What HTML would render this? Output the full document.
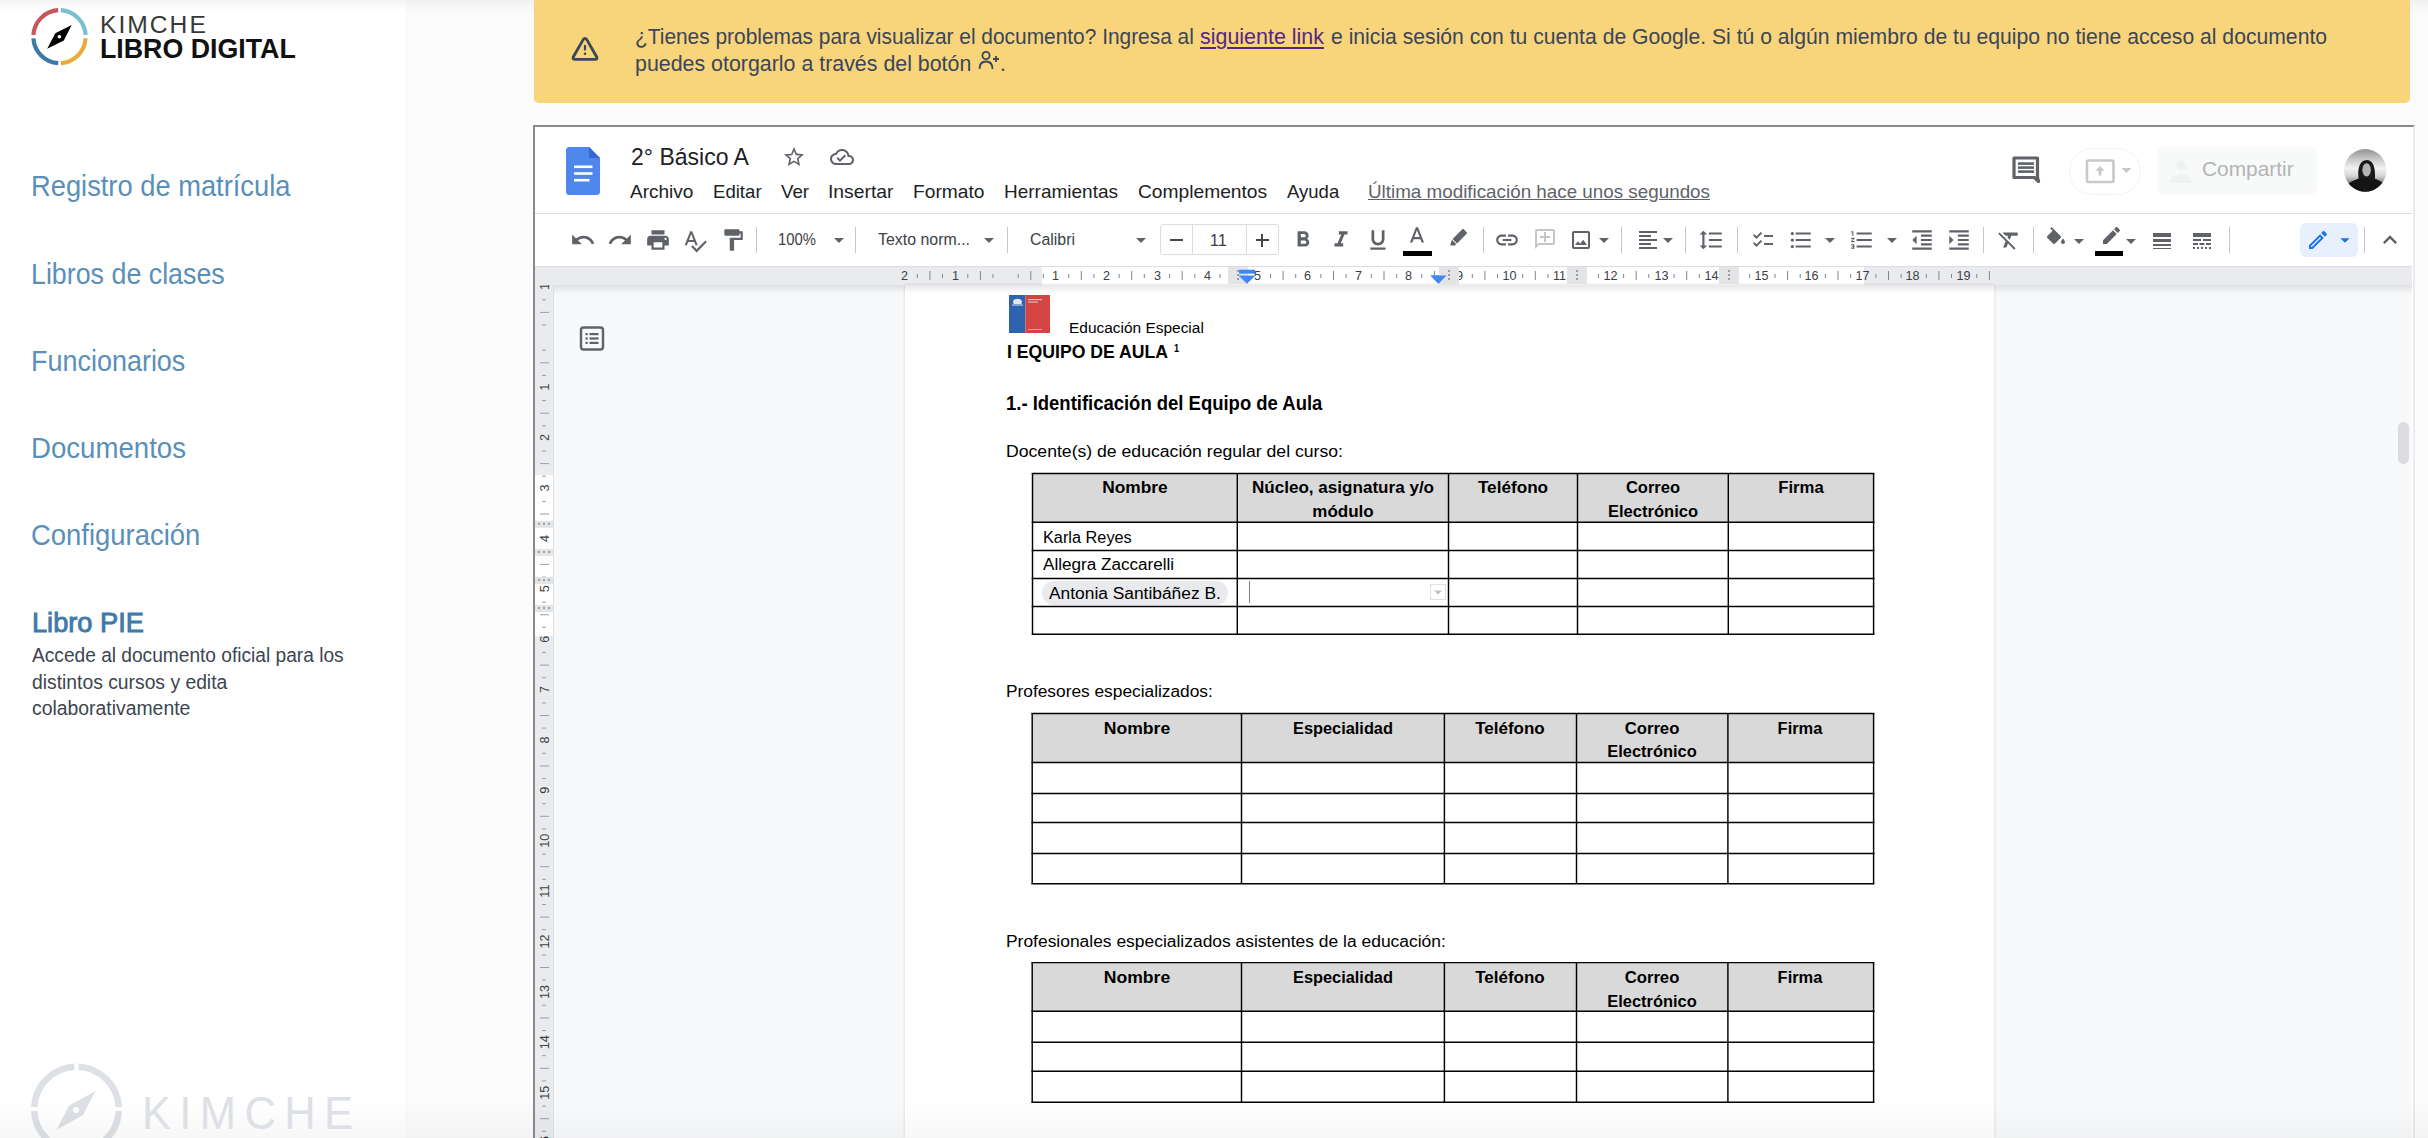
<!DOCTYPE html>
<html><head><meta charset="utf-8"><style>
html,body{margin:0;padding:0;}
body{width:2428px;height:1138px;overflow:hidden;position:relative;background:#fff;font-family:"Liberation Sans", sans-serif;}
.t{position:absolute;white-space:nowrap;line-height:1;}
</style></head><body>
<div style="position:absolute;left:405px;top:0;width:2023px;height:1138px;background:#fbfbfc"></div>
<div style="position:absolute;left:0;top:0;width:2428px;height:12px;background:linear-gradient(rgba(0,0,0,0.045),rgba(0,0,0,0))"></div>
<svg style="position:absolute;left:0;top:0" width="405" height="80">
<g fill="none" stroke-width="4.2">
<path d="M 33.4 34.9 A 26.5 26.5 0 0 1 58.2 10.2" stroke="#c9545a"/>
<path d="M 60.8 10.2 A 26.5 26.5 0 0 1 85.6 34.9" stroke="#78bfd0"/>
<path d="M 85.6 38.4 A 26.5 26.5 0 0 1 60.8 63.2" stroke="#e8ab3c"/>
<path d="M 58.2 63.2 A 26.5 26.5 0 0 1 33.4 38.4" stroke="#3d78a8"/>
</g>
<path d="M 71.7 25 L 63.8 40.5 L 47.2 48.8 L 55.3 33.2 Z" fill="#000"/>
<circle cx="59.4" cy="36.7" r="1.8" fill="#fff"/>
</svg>
<svg style="position:absolute;left:0;top:1040" width="405" height="98">
<g fill="none" stroke="#dde0e5" stroke-width="6.5">
<path d="M 34.2 67 A 42.5 42.5 0 0 1 74.5 26.7"/>
<path d="M 78.5 26.7 A 42.5 42.5 0 0 1 118.8 67"/>
<path d="M 118.8 71 A 42.5 42.5 0 0 1 78.5 111.3"/>
<path d="M 74.5 111.3 A 42.5 42.5 0 0 1 34.2 71"/>
</g>
<path d="M 95.5 51 L 83 75 L 56.5 90 L 69 65.5 Z" fill="#dde0e5"/>
<circle cx="76" cy="70" r="3" fill="#fff"/>
</svg>
<div style="position:absolute;left:534px;top:0;width:1876px;height:103px;background:#f8d47b;border-radius:0 0 5px 5px;"></div>
<svg style="position:absolute;left:570px;top:34px" width="30" height="30" viewBox="0 0 30 30">
<path d="M13.2 5.6 Q15 3 16.8 5.6 L26.6 22.8 Q27.8 25.4 25 25.4 H5 Q2.2 25.4 3.4 22.8 Z" fill="none" stroke="#3b4658" stroke-width="2.8" stroke-linejoin="round"/>
<line x1="15" y1="11.8" x2="15" y2="15.6" stroke="#3b4658" stroke-width="2.2" stroke-linecap="round"/>
<circle cx="15" cy="19.8" r="1.3" fill="#3b4658"/>
</svg>
<svg style="position:absolute;left:978px;top:50px" width="24" height="22" viewBox="0 0 24 22">
<circle cx="8" cy="5.5" r="3.6" fill="none" stroke="#3b4658" stroke-width="1.8"/>
<path d="M1.5 19 C1.5 13 4.5 11.5 8 11.5 C11.5 11.5 14.5 13 14.5 19" fill="none" stroke="#3b4658" stroke-width="1.8"/>
<path d="M18 6 V12 M15 9 H21" stroke="#3b4658" stroke-width="1.8"/>
</svg>
<div style="position:absolute;left:533px;top:125px;width:1882px;height:1013px;background:#fff;border-top:2px solid #8a8a8a;border-left:2px solid #8a8a8a;border-right:2px solid #ebebeb;box-sizing:border-box;"></div>
<div style="position:absolute;left:535px;top:213px;width:1877px;height:1px;background:#dadce0"></div>
<div style="position:absolute;left:535px;top:266px;width:1877px;height:1px;background:#dadce0"></div>
<div style="position:absolute;left:535px;top:267px;width:1877px;height:871px;background:#f8f9fa"></div>
<div style="position:absolute;left:535px;top:267px;width:1877px;height:18px;background:#e9ebee"></div>
<div style="position:absolute;left:1042px;top:267px;width:822px;height:18px;background:#fff"></div>
<div style="position:absolute;left:553px;top:285px;width:1859px;height:9px;background:linear-gradient(#dedfe1,rgba(248,249,250,0))"></div>
<div style="position:absolute;left:905px;top:285px;width:1089px;height:853px;background:#fff;box-shadow:0 0 3px rgba(0,0,0,0.16)"></div>
<div style="position:absolute;left:905px;top:285px;width:1089px;height:9px;background:linear-gradient(rgba(0,0,0,0.09),rgba(0,0,0,0))"></div>
<div style="position:absolute;left:535px;top:285px;width:19px;height:853px;background:#fff;border-right:1px solid #dfe0e2;box-sizing:border-box"></div>
<div style="position:absolute;left:535px;top:285px;width:18px;height:190px;background:#e9ebee"></div>
<div style="position:absolute;left:535px;top:636px;width:18px;height:502px;background:#e9ebee"></div>
<svg style="position:absolute;left:565px;top:146px" width="36" height="50" viewBox="0 0 36 50">
<path d="M3.5 1 H24 L35 12 V45.5 A3.5 3.5 0 0 1 31.5 49 H4.5 A3.5 3.5 0 0 1 1 45.5 V4.5 A3.5 3.5 0 0 1 4.5 1 Z" fill="#4f86ec"/>
<path d="M24 1 L35 12 H24 Z" fill="#3367d6"/>
<rect x="9" y="19.5" width="18.5" height="2.6" fill="#fff"/>
<rect x="9" y="26.2" width="18.5" height="2.6" fill="#fff"/>
<rect x="9" y="32.9" width="15.5" height="2.6" fill="#fff"/>
</svg>
<svg style="position:absolute;left:782.0px;top:144.5px" width="24" height="24" viewBox="0 0 24 24"><path d="M22 9.24l-7.19-.62L12 2 9.19 8.63 2 9.24l5.46 4.73L5.82 21 12 17.27 18.18 21l-1.63-7.03L22 9.24zM12 15.4l-3.76 2.27 1-4.28-3.32-2.88 4.38-.38L12 6.1l1.71 4.04 4.38.38-3.32 2.88 1 4.28L12 15.4z" fill="#5f6368" /></svg>
<svg style="position:absolute;left:829.5px;top:144.5px" width="24" height="24" viewBox="0 0 24 24"><path d="M19.35 10.04C18.67 6.59 15.64 4 12 4 9.11 4 6.6 5.64 5.35 8.04 2.34 8.36 0 10.91 0 14c0 3.31 2.69 6 6 6h13c2.76 0 5-2.24 5-5 0-2.64-2.05-4.78-4.65-4.96zM19 18H6c-2.21 0-4-1.79-4-4 0-2.05 1.53-3.76 3.56-3.97l1.07-.11.5-.95C8.08 7.14 9.94 6 12 6c2.62 0 4.88 1.86 5.39 4.43l.3 1.5 1.53.11c1.56.1 2.78 1.41 2.78 2.96 0 1.65-1.35 3-3 3zm-9-3.82l-2.09-2.09L6.5 13.5 10 17l6.01-6.01-1.41-1.41z" fill="#5f6368" /></svg>
<svg style="position:absolute;left:2010px;top:154px" width="32" height="30" viewBox="0 0 32 30">
<path d="M4 4 H27.5 V23.5 L28.5 27.5 L24.5 23.5 H4 Z" fill="none" stroke="#5f6368" stroke-width="3.2" stroke-linejoin="round"/>
<rect x="8" y="8.3" width="16" height="2.6" fill="#5f6368"/><rect x="8" y="12.3" width="16" height="2.6" fill="#5f6368"/><rect x="8" y="16.3" width="16" height="2.6" fill="#5f6368"/>
</svg>
<div style="position:absolute;left:2069px;top:147.5px;width:71.5px;height:47px;border-radius:23.5px;border:1px solid #f3f3f3;box-sizing:border-box"></div>
<svg style="position:absolute;left:2084px;top:157px" width="50" height="28" viewBox="0 0 50 28">
<rect x="3" y="3.5" width="26.5" height="21.5" fill="none" stroke="#c8c8c8" stroke-width="2.6" rx="1.5"/>
<path d="M16 9 L11.5 13.8 H14.6 V18.5 H17.4 V13.8 H20.5 Z" fill="#c8c8c8"/>
<path d="M37.5 11 L47.5 11 L42.5 16 Z" fill="#c8c8c8"/>
</svg>
<div style="position:absolute;left:2157px;top:147px;width:160px;height:48px;border-radius:6px;background:#f8f9f9"></div>
<svg style="position:absolute;left:2168px;top:157px" width="26" height="28" viewBox="0 0 26 28"><circle cx="13" cy="8.5" r="5" fill="#f0f1f1"/><path d="M2 26 C2 19 7 17.5 13 17.5 C19 17.5 24 19 24 26 Z" fill="#f0f1f1"/></svg>
<svg style="position:absolute;left:2343px;top:148px" width="44" height="45" viewBox="0 0 44 45">
<defs><clipPath id="av"><circle cx="22.2" cy="22.3" r="21.2"/></clipPath>
<linearGradient id="avg" x1="0" y1="0" x2="0" y2="1"><stop offset="0" stop-color="#8c8c8c"/><stop offset="0.25" stop-color="#c9c9c9"/><stop offset="0.45" stop-color="#f2f2f2"/><stop offset="0.62" stop-color="#d6d6d6"/><stop offset="0.8" stop-color="#7a7a7a"/><stop offset="1" stop-color="#444"/></linearGradient></defs>
<g clip-path="url(#av)">
<rect width="44" height="45" fill="url(#avg)"/>
<path d="M16.5 45 L15.5 30 C14.5 22 16 12.5 23.5 12 C30.5 12 32.5 20 32 30 L33 45 Z" fill="#1a1a1a"/>
<path d="M0 45 L0 40 C5 35 10 32.5 16 30.5 L31 30.5 C36 32 40 34.5 44 38 L44 45 Z" fill="#141414"/>
<ellipse cx="23.6" cy="21.8" rx="4.3" ry="6.6" fill="#b4b4b4"/>
</g></svg>
<svg style="position:absolute;left:569.6px;top:226.5px" width="26" height="26" viewBox="0 0 24 24"><path d="M12.5 8c-2.65 0-5.05.99-6.9 2.6L2 7v9h9l-3.62-3.62c1.39-1.16 3.16-1.88 5.12-1.88 3.54 0 6.55 2.31 7.6 5.5l2.37-.78C21.08 11.03 17.15 8 12.5 8z" fill="#5f6368" /></svg>
<svg style="position:absolute;left:607.4px;top:226.5px" width="26" height="26" viewBox="0 0 24 24"><path d="M18.4 10.6C16.55 8.99 14.15 8 11.5 8c-4.65 0-8.58 3.03-9.96 7.22L3.9 16c1.05-3.19 4.05-5.5 7.6-5.5 1.95 0 3.73.72 5.12 1.88L13 16h9V7l-3.6 3.6z" fill="#5f6368" /></svg>
<svg style="position:absolute;left:645.0px;top:226.5px" width="26" height="26" viewBox="0 0 24 24"><path d="M19 8H5c-1.66 0-3 1.34-3 3v6h4v4h12v-4h4v-6c0-1.66-1.34-3-3-3zm-3 11H8v-5h8v5zm3-7c-.55 0-1-.45-1-1s.45-1 1-1 1 .45 1 1-.45 1-1 1zm-1-9H6v4h12V3z" fill="#5f6368" /></svg>
<svg style="position:absolute;left:682.0px;top:227.5px" width="26" height="26" viewBox="0 0 24 24"><path d="M12.45 16h2.09L9.43 3H7.57L2.46 16h2.09l1.12-3h5.64l1.14 3zm-6.02-5L8.5 5.48 10.57 11H6.43zm15.16.59l-8.09 8.09L9.83 16l-1.41 1.41 5.09 5.09L23 13l-1.41-1.41z" fill="#5f6368" /></svg>
<svg style="position:absolute;left:719.5px;top:226.5px" width="26" height="26" viewBox="0 0 24 24"><path d="M18 4V3c0-.55-.45-1-1-1H5c-.55 0-1 .45-1 1v4c0 .55.45 1 1 1h12c.55 0 1-.45 1-1V6h1v4H9v11c0 .55.45 1 1 1h2c.55 0 1-.45 1-1v-9h8V4h-3z" fill="#5f6368" /></svg>
<div style="position:absolute;left:756.1px;top:227px;width:1px;height:26px;background:#c7c7c7"></div>
<svg style="position:absolute;left:827.0px;top:228.0px" width="24" height="24" viewBox="0 0 24 24"><path d="M7 10l5 5 5-5z" fill="#5f6368" /></svg>
<div style="position:absolute;left:854.5px;top:227px;width:1px;height:26px;background:#c7c7c7"></div>
<svg style="position:absolute;left:977.0px;top:228.0px" width="24" height="24" viewBox="0 0 24 24"><path d="M7 10l5 5 5-5z" fill="#5f6368" /></svg>
<div style="position:absolute;left:1007.1px;top:227px;width:1px;height:26px;background:#c7c7c7"></div>
<svg style="position:absolute;left:1129.0px;top:228.0px" width="24" height="24" viewBox="0 0 24 24"><path d="M7 10l5 5 5-5z" fill="#5f6368" /></svg>
<div style="position:absolute;left:1160px;top:224px;width:119px;height:31px;border:1px solid #dadce0;border-radius:3px;box-sizing:border-box"></div>
<div style="position:absolute;left:1192px;top:224px;width:1px;height:31px;background:#dadce0"></div>
<div style="position:absolute;left:1246px;top:224px;width:1px;height:31px;background:#dadce0"></div>
<div style="position:absolute;left:1170px;top:239px;width:13px;height:2.2px;background:#444746"></div>
<div style="position:absolute;left:1255.5px;top:239px;width:13px;height:2.2px;background:#444746"></div>
<div style="position:absolute;left:1261px;top:233.5px;width:2.2px;height:13px;background:#444746"></div>
<svg style="position:absolute;left:1290.0px;top:226.5px" width="26" height="26" viewBox="0 0 24 24"><path d="M15.6 10.79c.97-.67 1.65-1.77 1.65-2.79 0-2.26-1.75-4-4-4H7v14h7.04c2.09 0 3.71-1.7 3.71-3.79 0-1.52-.86-2.82-2.15-3.42zM10 6.5h3c.83 0 1.5.67 1.5 1.5s-.67 1.5-1.5 1.5h-3v-3zm3.5 9H10v-3h3.5c.83 0 1.5.67 1.5 1.5s-.67 1.5-1.5 1.5z" fill="#5f6368" /></svg>
<svg style="position:absolute;left:1327.6px;top:226.5px" width="26" height="26" viewBox="0 0 24 24"><path d="M10 4v3h2.21l-3.42 8H6v3h8v-3h-2.21l3.42-8H18V4z" fill="#5f6368" /></svg>
<svg style="position:absolute;left:1365.0px;top:226.5px" width="26" height="26" viewBox="0 0 24 24"><path d="M12 17c3.31 0 6-2.69 6-6V3h-2.5v8c0 1.93-1.57 3.5-3.5 3.5S8.5 12.93 8.5 11V3H6v8c0 3.31 2.69 6 6 6zm-7 2v2h14v-2H5z" fill="#5f6368" /></svg>
<svg style="position:absolute;left:1404.0px;top:224.0px" width="26" height="26" viewBox="0 0 24 24"><path d="M11 3L5.5 17h2.25l1.12-3h6.25l1.12 3h2.25L13 3h-2zm-1.38 9L12 5.67 14.38 12H9.62z" fill="#5f6368" /></svg>
<div style="position:absolute;left:1403px;top:251px;width:29px;height:4.5px;background:#000"></div>
<svg style="position:absolute;left:1446.0px;top:225.5px" width="24" height="24" viewBox="0 0 24 24"><path d="M17.7 3.3l3 3c.4.4.4 1 0 1.4L11 17.4 6.6 13 16.3 3.3c.4-.4 1-.4 1.4 0zM5.9 13.8l4.3 4.3-1.4 1.4H4.5v-1.4z" fill="#5f6368" /></svg>
<div style="position:absolute;left:1483.1px;top:227px;width:1px;height:26px;background:#c7c7c7"></div>
<svg style="position:absolute;left:1494.4px;top:226.5px" width="26" height="26" viewBox="0 0 24 24"><path d="M3.9 12c0-1.71 1.39-3.1 3.1-3.1h4V7H7c-2.76 0-5 2.24-5 5s2.24 5 5 5h4v-1.9H7c-1.71 0-3.1-1.39-3.1-3.1zM8 13h8v-2H8v2zm9-6h-4v1.9h4c1.71 0 3.1 1.39 3.1 3.1s-1.39 3.1-3.1 3.1h-4V17h4c2.76 0 5-2.24 5-5s-2.24-5-5-5z" fill="#5f6368" /></svg>
<svg style="position:absolute;left:1533.0px;top:226.5px" width="24" height="24" viewBox="0 0 24 24"><path d="M20 2H4c-1.1 0-1.99.9-1.99 2L2 22l4-4h14c1.1 0 2-.9 2-2V4c0-1.1-.9-2-2-2zm0 14H5.17L4 17.17V4h16v12zM11 5h2v4h4v2h-4v4h-2v-4H7V9h4z" fill="#c4c7c5" /></svg>
<svg style="position:absolute;left:1568.5px;top:227.5px" width="24" height="24" viewBox="0 0 24 24"><path d="M19 5v14H5V5h14m0-2H5c-1.1 0-2 .9-2 2v14c0 1.1.9 2 2 2h14c1.1 0 2-.9 2-2V5c0-1.1-.9-2-2-2zm-4.86 8.86l-3 3.87L9 13.14 6 17h12l-3.86-5.14z" fill="#5f6368" /></svg>
<svg style="position:absolute;left:1591.8px;top:228.0px" width="24" height="24" viewBox="0 0 24 24"><path d="M7 10l5 5 5-5z" fill="#5f6368" /></svg>
<div style="position:absolute;left:1620.5px;top:227px;width:1px;height:26px;background:#c7c7c7"></div>
<svg style="position:absolute;left:1635.5px;top:227.5px" width="24" height="24" viewBox="0 0 24 24"><path d="M15 15H3v2h12v-2zm0-8H3v2h12V7zM3 13h18v-2H3v2zm0 8h18v-2H3v2zM3 3v2h18V3H3z" fill="#5f6368" /></svg>
<svg style="position:absolute;left:1656.0px;top:228.0px" width="24" height="24" viewBox="0 0 24 24"><path d="M7 10l5 5 5-5z" fill="#5f6368" /></svg>
<div style="position:absolute;left:1685.0px;top:227px;width:1px;height:26px;background:#c7c7c7"></div>
<svg style="position:absolute;left:1698.0px;top:226.5px" width="26" height="26" viewBox="0 0 24 24"><path d="M6 7h2.5L5 3.5 1.5 7H4v10H1.5L5 20.5 8.5 17H6V7zm4-2v2h12V5H10zm0 14h12v-2H10v2zm0-6h12v-2H10v2z" fill="#5f6368" /></svg>
<div style="position:absolute;left:1737.2px;top:227px;width:1px;height:26px;background:#c7c7c7"></div>
<svg style="position:absolute;left:1751.0px;top:227.5px" width="24" height="24" viewBox="0 0 24 24"><path d="M22 7h-9v2h9V7zm0 8h-9v2h9v-2zM5.54 11L2 7.46l1.41-1.41 2.12 2.12 4.24-4.24 1.41 1.41L5.54 11zm0 8L2 15.46l1.41-1.41 2.12 2.12 4.24-4.24 1.41 1.41L5.54 19z" fill="#5f6368" /></svg>
<svg style="position:absolute;left:1788.0px;top:226.5px" width="26" height="26" viewBox="0 0 24 24"><path d="M4 10.5c-.83 0-1.5.67-1.5 1.5s.67 1.5 1.5 1.5 1.5-.67 1.5-1.5-.67-1.5-1.5-1.5zm0-6c-.83 0-1.5.67-1.5 1.5S3.17 7.5 4 7.5 5.5 6.83 5.5 6 4.83 4.5 4 4.5zm0 12c-.83 0-1.5.68-1.5 1.5s.68 1.5 1.5 1.5 1.5-.68 1.5-1.5-.67-1.5-1.5-1.5zM7 19h14v-2H7v2zm0-6h14v-2H7v2zm0-8v2h14V5H7z" fill="#5f6368" /></svg>
<svg style="position:absolute;left:1817.6px;top:228.0px" width="24" height="24" viewBox="0 0 24 24"><path d="M7 10l5 5 5-5z" fill="#5f6368" /></svg>
<svg style="position:absolute;left:1848.7px;top:226.5px" width="26" height="26" viewBox="0 0 24 24"><path d="M2 17h2v.5H3v1h1v.5H2v1h3v-4H2v1zm1-9h1V4H2v1h1v3zm-1 3h1.8L2 13.1v.9h3v-1H3.2L5 10.9V10H2v1zm5-6v2h14V5H7zm0 14h14v-2H7v2zm0-6h14v-2H7v2z" fill="#5f6368" /></svg>
<svg style="position:absolute;left:1879.6px;top:228.0px" width="24" height="24" viewBox="0 0 24 24"><path d="M7 10l5 5 5-5z" fill="#5f6368" /></svg>
<svg style="position:absolute;left:1909.3px;top:226.5px" width="26" height="26" viewBox="0 0 24 24"><path d="M11 17h10v-2H11v2zm-8-5l4 4V8l-4 4zm0 9h18v-2H3v2zM3 3v2h18V3H3zm8 6h10V7H11v2zm0 4h10v-2H11v2z" fill="#5f6368" /></svg>
<svg style="position:absolute;left:1946.4px;top:226.5px" width="26" height="26" viewBox="0 0 24 24"><path d="M3 21h18v-2H3v2zM3 8v8l4-4-4-4zm8 9h10v-2H11v2zM3 3v2h18V3H3zm8 6h10V7H11v2zm0 4h10v-2H11v2z" fill="#5f6368" /></svg>
<div style="position:absolute;left:1982.5px;top:227px;width:1px;height:26px;background:#c7c7c7"></div>
<svg style="position:absolute;left:1996.0px;top:226.5px" width="26" height="26" viewBox="0 0 24 24"><path d="M3.27 5L2 6.27l6.97 6.97L6.5 19h3l1.57-3.66L16.73 21 18 19.73 3.55 5.27 3.27 5zM6 5v.18L8.82 8h2.4l-.72 1.68 2.1 2.1L14.21 8H20V5H6z" fill="#5f6368" /></svg>
<div style="position:absolute;left:2032.9px;top:227px;width:1px;height:26px;background:#c7c7c7"></div>
<svg style="position:absolute;left:2044.0px;top:226.5px" width="24" height="24" viewBox="0 0 24 24"><path d="M16.56 8.94L7.62 0 6.21 1.41l2.38 2.38-5.15 5.15c-.59.59-.59 1.54 0 2.12l5.5 5.5c.29.29.68.44 1.06.44s.77-.15 1.06-.44l5.5-5.5c.59-.58.59-1.53 0-2.12zM19 11.5s-2 2.17-2 3.5c0 1.1.9 2 2 2s2-.9 2-2c0-1.33-2-3.5-2-3.5z" fill="#5f6368" /></svg>
<svg style="position:absolute;left:2067.0px;top:229.0px" width="24" height="24" viewBox="0 0 24 24"><path d="M7 10l5 5 5-5z" fill="#5f6368" /></svg>
<svg style="position:absolute;left:2099.0px;top:226.5px" width="24" height="24" viewBox="0 0 24 24"><path d="M17.75 7L14 3.25l-10 10V17h3.75l10-10zm2.96-2.96c.39-.39.39-1.02 0-1.41L18.37.29c-.39-.39-1.02-.39-1.41 0L15 2.25 18.75 6l1.96-1.96z" fill="#5f6368" /></svg>
<div style="position:absolute;left:2095px;top:251px;width:28px;height:5px;background:#000"></div>
<svg style="position:absolute;left:2119.0px;top:229.0px" width="24" height="24" viewBox="0 0 24 24"><path d="M7 10l5 5 5-5z" fill="#5f6368" /></svg>
<svg style="position:absolute;left:2150.4px;top:228.5px" width="24" height="24" viewBox="0 0 24 24"><path d="M3 17h18v-2H3v2zm0 3h18v-1H3v1zm0-7h18v-3H3v3zm0-9v4h18V4H3z" fill="#5f6368" /></svg>
<svg style="position:absolute;left:2190.4px;top:228.5px" width="24" height="24" viewBox="0 0 24 24"><path d="M3 16h5v-2H3v2zm6.5 0h5v-2h-5v2zm6.5 0h5v-2h-5v2zM3 20h2v-2H3v2zm4 0h2v-2H7v2zm4 0h2v-2h-2v2zm4 0h2v-2h-2v2zm4 0h2v-2h-2v2zM3 12h8v-2H3v2zm10 0h8v-2h-8v2zM3 4v4h18V4H3z" fill="#5f6368" /></svg>
<div style="position:absolute;left:2229.0px;top:227px;width:1px;height:26px;background:#c7c7c7"></div>
<div style="position:absolute;left:2300px;top:223px;width:58px;height:34px;border-radius:6px;background:#e8f0fe"></div>
<svg style="position:absolute;left:2306.0px;top:227.5px" width="24" height="24" viewBox="0 0 24 24"><path d="M14.06 9.02l.92.92L5.92 19H5v-.92l9.06-9.06M17.66 3c-.25 0-.51.1-.7.29l-1.83 1.83 3.75 3.75 1.83-1.83c.39-.39.39-1.02 0-1.41l-2.34-2.34c-.2-.2-.45-.29-.71-.29zm-3.6 3.19L3 17.25V21h3.75L17.81 9.94l-3.75-3.75z" fill="#1a73e8" /></svg>
<svg style="position:absolute;left:2334.4px;top:229.0px" width="22" height="22" viewBox="0 0 24 24"><path d="M7 10l5 5 5-5z" fill="#1a73e8" /></svg>
<div style="position:absolute;left:2363.9px;top:227px;width:1px;height:26px;background:#c7c7c7"></div>
<svg style="position:absolute;left:2375.5px;top:225.5px" width="28" height="28" viewBox="0 0 24 24"><path d="M12 8l-6 6 1.41 1.41L12 10.83l4.59 4.58L18 14z" fill="#5f6368" /></svg>
<svg style="position:absolute;left:535px;top:267px" width="1877" height="18"><rect x="381.8" y="7" width="1" height="4" fill="#80868b"/><rect x="394.4" y="4" width="1" height="9" fill="#80868b"/><rect x="407.0" y="7" width="1" height="4" fill="#80868b"/><rect x="432.3" y="7" width="1" height="4" fill="#80868b"/><rect x="444.9" y="4" width="1" height="9" fill="#80868b"/><rect x="457.5" y="7" width="1" height="4" fill="#80868b"/><rect x="482.7" y="7" width="1" height="4" fill="#80868b"/><rect x="495.3" y="4" width="1" height="9" fill="#80868b"/><rect x="507.9" y="7" width="1" height="4" fill="#80868b"/><rect x="533.2" y="7" width="1" height="4" fill="#80868b"/><rect x="545.8" y="4" width="1" height="9" fill="#80868b"/><rect x="558.4" y="7" width="1" height="4" fill="#80868b"/><rect x="583.6" y="7" width="1" height="4" fill="#80868b"/><rect x="596.2" y="4" width="1" height="9" fill="#80868b"/><rect x="608.8" y="7" width="1" height="4" fill="#80868b"/><rect x="634.1" y="7" width="1" height="4" fill="#80868b"/><rect x="646.7" y="4" width="1" height="9" fill="#80868b"/><rect x="659.3" y="7" width="1" height="4" fill="#80868b"/><rect x="684.5" y="7" width="1" height="4" fill="#80868b"/><rect x="697.1" y="4" width="1" height="9" fill="#80868b"/><rect x="709.7" y="7" width="1" height="4" fill="#80868b"/><rect x="735.0" y="7" width="1" height="4" fill="#80868b"/><rect x="747.6" y="4" width="1" height="9" fill="#80868b"/><rect x="760.2" y="7" width="1" height="4" fill="#80868b"/><rect x="785.4" y="7" width="1" height="4" fill="#80868b"/><rect x="798.0" y="4" width="1" height="9" fill="#80868b"/><rect x="810.6" y="7" width="1" height="4" fill="#80868b"/><rect x="835.9" y="7" width="1" height="4" fill="#80868b"/><rect x="848.5" y="4" width="1" height="9" fill="#80868b"/><rect x="861.1" y="7" width="1" height="4" fill="#80868b"/><rect x="886.3" y="7" width="1" height="4" fill="#80868b"/><rect x="898.9" y="4" width="1" height="9" fill="#80868b"/><rect x="911.5" y="7" width="1" height="4" fill="#80868b"/><rect x="936.8" y="7" width="1" height="4" fill="#80868b"/><rect x="949.4" y="4" width="1" height="9" fill="#80868b"/><rect x="962.0" y="7" width="1" height="4" fill="#80868b"/><rect x="987.2" y="7" width="1" height="4" fill="#80868b"/><rect x="999.8" y="4" width="1" height="9" fill="#80868b"/><rect x="1012.4" y="7" width="1" height="4" fill="#80868b"/><rect x="1037.7" y="7" width="1" height="4" fill="#80868b"/><rect x="1050.3" y="4" width="1" height="9" fill="#80868b"/><rect x="1062.9" y="7" width="1" height="4" fill="#80868b"/><rect x="1088.1" y="7" width="1" height="4" fill="#80868b"/><rect x="1100.7" y="4" width="1" height="9" fill="#80868b"/><rect x="1113.3" y="7" width="1" height="4" fill="#80868b"/><rect x="1138.6" y="7" width="1" height="4" fill="#80868b"/><rect x="1151.2" y="4" width="1" height="9" fill="#80868b"/><rect x="1163.8" y="7" width="1" height="4" fill="#80868b"/><rect x="1189.0" y="7" width="1" height="4" fill="#80868b"/><rect x="1201.6" y="4" width="1" height="9" fill="#80868b"/><rect x="1214.2" y="7" width="1" height="4" fill="#80868b"/><rect x="1239.5" y="7" width="1" height="4" fill="#80868b"/><rect x="1252.1" y="4" width="1" height="9" fill="#80868b"/><rect x="1264.7" y="7" width="1" height="4" fill="#80868b"/><rect x="1289.9" y="7" width="1" height="4" fill="#80868b"/><rect x="1302.5" y="4" width="1" height="9" fill="#80868b"/><rect x="1315.1" y="7" width="1" height="4" fill="#80868b"/><rect x="1340.4" y="7" width="1" height="4" fill="#80868b"/><rect x="1353.0" y="4" width="1" height="9" fill="#80868b"/><rect x="1365.6" y="7" width="1" height="4" fill="#80868b"/><rect x="1390.8" y="7" width="1" height="4" fill="#80868b"/><rect x="1403.4" y="4" width="1" height="9" fill="#80868b"/><rect x="1416.0" y="7" width="1" height="4" fill="#80868b"/><rect x="1441.3" y="7" width="1" height="4" fill="#80868b"/><rect x="1453.9" y="4" width="1" height="9" fill="#80868b"/><rect x="693" y="0" width="20" height="17" fill="#e3e4e6"/><rect x="702" y="3" width="2" height="2" fill="#9aa0a6"/><rect x="702" y="7" width="2" height="2" fill="#9aa0a6"/><rect x="702" y="11" width="2" height="2" fill="#9aa0a6"/><rect x="904" y="0" width="20" height="17" fill="#e3e4e6"/><rect x="913" y="3" width="2" height="2" fill="#9aa0a6"/><rect x="913" y="7" width="2" height="2" fill="#9aa0a6"/><rect x="913" y="11" width="2" height="2" fill="#9aa0a6"/><rect x="1032" y="0" width="20" height="17" fill="#e3e4e6"/><rect x="1041" y="3" width="2" height="2" fill="#9aa0a6"/><rect x="1041" y="7" width="2" height="2" fill="#9aa0a6"/><rect x="1041" y="11" width="2" height="2" fill="#9aa0a6"/><rect x="1184" y="0" width="20" height="17" fill="#e3e4e6"/><rect x="1193" y="3" width="2" height="2" fill="#9aa0a6"/><rect x="1193" y="7" width="2" height="2" fill="#9aa0a6"/><rect x="1193" y="11" width="2" height="2" fill="#9aa0a6"/></svg>
<svg style="position:absolute;left:1230px;top:266px" width="40" height="20" viewBox="0 0 40 20">
<rect x="9" y="3.7" width="16" height="4" fill="#4285f4"/><path d="M8.5 9.6 H25.5 L17 17.8 Z" fill="#4285f4"/></svg>
<svg style="position:absolute;left:1420px;top:266px" width="40" height="20" viewBox="0 0 40 20">
<path d="M10.5 9.6 H26.5 L18.5 17.8 Z" fill="#4285f4"/></svg>
<svg style="position:absolute;left:535px;top:285px" width="18" height="853"><text x="0" y="0" transform="translate(14.3 1.4) rotate(-90)" font-family="Liberation Sans" font-size="12.6" fill="#3c4043" text-anchor="middle">1</text><text x="0" y="0" transform="translate(14.3 102.2) rotate(-90)" font-family="Liberation Sans" font-size="12.6" fill="#3c4043" text-anchor="middle">1</text><text x="0" y="0" transform="translate(14.3 152.6) rotate(-90)" font-family="Liberation Sans" font-size="12.6" fill="#3c4043" text-anchor="middle">2</text><text x="0" y="0" transform="translate(14.3 203.0) rotate(-90)" font-family="Liberation Sans" font-size="12.6" fill="#3c4043" text-anchor="middle">3</text><text x="0" y="0" transform="translate(14.3 253.4) rotate(-90)" font-family="Liberation Sans" font-size="12.6" fill="#3c4043" text-anchor="middle">4</text><text x="0" y="0" transform="translate(14.3 303.8) rotate(-90)" font-family="Liberation Sans" font-size="12.6" fill="#3c4043" text-anchor="middle">5</text><text x="0" y="0" transform="translate(14.3 354.2) rotate(-90)" font-family="Liberation Sans" font-size="12.6" fill="#3c4043" text-anchor="middle">6</text><text x="0" y="0" transform="translate(14.3 404.5) rotate(-90)" font-family="Liberation Sans" font-size="12.6" fill="#3c4043" text-anchor="middle">7</text><text x="0" y="0" transform="translate(14.3 454.9) rotate(-90)" font-family="Liberation Sans" font-size="12.6" fill="#3c4043" text-anchor="middle">8</text><text x="0" y="0" transform="translate(14.3 505.3) rotate(-90)" font-family="Liberation Sans" font-size="12.6" fill="#3c4043" text-anchor="middle">9</text><text x="0" y="0" transform="translate(14.3 555.7) rotate(-90)" font-family="Liberation Sans" font-size="12.6" fill="#3c4043" text-anchor="middle">10</text><text x="0" y="0" transform="translate(14.3 606.1) rotate(-90)" font-family="Liberation Sans" font-size="12.6" fill="#3c4043" text-anchor="middle">11</text><text x="0" y="0" transform="translate(14.3 656.5) rotate(-90)" font-family="Liberation Sans" font-size="12.6" fill="#3c4043" text-anchor="middle">12</text><text x="0" y="0" transform="translate(14.3 706.9) rotate(-90)" font-family="Liberation Sans" font-size="12.6" fill="#3c4043" text-anchor="middle">13</text><text x="0" y="0" transform="translate(14.3 757.3) rotate(-90)" font-family="Liberation Sans" font-size="12.6" fill="#3c4043" text-anchor="middle">14</text><text x="0" y="0" transform="translate(14.3 807.7) rotate(-90)" font-family="Liberation Sans" font-size="12.6" fill="#3c4043" text-anchor="middle">15</text><text x="0" y="0" transform="translate(14.3 858.0) rotate(-90)" font-family="Liberation Sans" font-size="12.6" fill="#3c4043" text-anchor="middle">16</text><rect x="7" y="14.3" width="4" height="1" fill="#9aa0a6"/><rect x="5" y="26.9" width="9" height="1" fill="#9aa0a6"/><rect x="7" y="39.5" width="4" height="1" fill="#9aa0a6"/><rect x="7" y="64.7" width="4" height="1" fill="#9aa0a6"/><rect x="5" y="77.3" width="9" height="1" fill="#9aa0a6"/><rect x="7" y="89.9" width="4" height="1" fill="#9aa0a6"/><rect x="7" y="115.1" width="4" height="1" fill="#9aa0a6"/><rect x="5" y="127.7" width="9" height="1" fill="#9aa0a6"/><rect x="7" y="140.3" width="4" height="1" fill="#9aa0a6"/><rect x="7" y="165.5" width="4" height="1" fill="#9aa0a6"/><rect x="5" y="178.1" width="9" height="1" fill="#9aa0a6"/><rect x="7" y="190.7" width="4" height="1" fill="#9aa0a6"/><rect x="7" y="215.9" width="4" height="1" fill="#9aa0a6"/><rect x="5" y="228.5" width="9" height="1" fill="#9aa0a6"/><rect x="7" y="241.1" width="4" height="1" fill="#9aa0a6"/><rect x="7" y="266.3" width="4" height="1" fill="#9aa0a6"/><rect x="5" y="278.9" width="9" height="1" fill="#9aa0a6"/><rect x="7" y="291.5" width="4" height="1" fill="#9aa0a6"/><rect x="7" y="316.7" width="4" height="1" fill="#9aa0a6"/><rect x="5" y="329.3" width="9" height="1" fill="#9aa0a6"/><rect x="7" y="341.9" width="4" height="1" fill="#9aa0a6"/><rect x="7" y="367.0" width="4" height="1" fill="#9aa0a6"/><rect x="5" y="379.6" width="9" height="1" fill="#9aa0a6"/><rect x="7" y="392.2" width="4" height="1" fill="#9aa0a6"/><rect x="7" y="417.4" width="4" height="1" fill="#9aa0a6"/><rect x="5" y="430.0" width="9" height="1" fill="#9aa0a6"/><rect x="7" y="442.6" width="4" height="1" fill="#9aa0a6"/><rect x="7" y="467.8" width="4" height="1" fill="#9aa0a6"/><rect x="5" y="480.4" width="9" height="1" fill="#9aa0a6"/><rect x="7" y="493.0" width="4" height="1" fill="#9aa0a6"/><rect x="7" y="518.2" width="4" height="1" fill="#9aa0a6"/><rect x="5" y="530.8" width="9" height="1" fill="#9aa0a6"/><rect x="7" y="543.4" width="4" height="1" fill="#9aa0a6"/><rect x="7" y="568.6" width="4" height="1" fill="#9aa0a6"/><rect x="5" y="581.2" width="9" height="1" fill="#9aa0a6"/><rect x="7" y="593.8" width="4" height="1" fill="#9aa0a6"/><rect x="7" y="619.0" width="4" height="1" fill="#9aa0a6"/><rect x="5" y="631.6" width="9" height="1" fill="#9aa0a6"/><rect x="7" y="644.2" width="4" height="1" fill="#9aa0a6"/><rect x="7" y="669.4" width="4" height="1" fill="#9aa0a6"/><rect x="5" y="682.0" width="9" height="1" fill="#9aa0a6"/><rect x="7" y="694.6" width="4" height="1" fill="#9aa0a6"/><rect x="7" y="719.8" width="4" height="1" fill="#9aa0a6"/><rect x="5" y="732.4" width="9" height="1" fill="#9aa0a6"/><rect x="7" y="745.0" width="4" height="1" fill="#9aa0a6"/><rect x="7" y="770.2" width="4" height="1" fill="#9aa0a6"/><rect x="5" y="782.8" width="9" height="1" fill="#9aa0a6"/><rect x="7" y="795.4" width="4" height="1" fill="#9aa0a6"/><rect x="7" y="820.6" width="4" height="1" fill="#9aa0a6"/><rect x="5" y="833.2" width="9" height="1" fill="#9aa0a6"/><rect x="7" y="845.8" width="4" height="1" fill="#9aa0a6"/><rect x="0" y="235.8" width="18" height="7" fill="#e3e4e6"/><rect x="3" y="237.8" width="2" height="2" fill="#9aa0a6"/><rect x="8" y="237.8" width="2" height="2" fill="#9aa0a6"/><rect x="13" y="237.8" width="2" height="2" fill="#9aa0a6"/><rect x="0" y="264.0" width="18" height="7" fill="#e3e4e6"/><rect x="3" y="266.0" width="2" height="2" fill="#9aa0a6"/><rect x="8" y="266.0" width="2" height="2" fill="#9aa0a6"/><rect x="13" y="266.0" width="2" height="2" fill="#9aa0a6"/><rect x="0" y="292.0" width="18" height="7" fill="#e3e4e6"/><rect x="3" y="294.0" width="2" height="2" fill="#9aa0a6"/><rect x="8" y="294.0" width="2" height="2" fill="#9aa0a6"/><rect x="13" y="294.0" width="2" height="2" fill="#9aa0a6"/><rect x="0" y="320.0" width="18" height="7" fill="#e3e4e6"/><rect x="3" y="322.0" width="2" height="2" fill="#9aa0a6"/><rect x="8" y="322.0" width="2" height="2" fill="#9aa0a6"/><rect x="13" y="322.0" width="2" height="2" fill="#9aa0a6"/></svg>
<svg style="position:absolute;left:578px;top:325px" width="28" height="28" viewBox="0 0 28 28">
<rect x="3" y="2.5" width="22" height="22" rx="2.5" fill="none" stroke="#5f6368" stroke-width="2.4"/>
<rect x="7.5" y="8" width="2.2" height="2.2" fill="#5f6368"/><rect x="11.5" y="8" width="9" height="2.2" fill="#5f6368"/>
<rect x="7.5" y="12.4" width="2.2" height="2.2" fill="#5f6368"/><rect x="11.5" y="12.4" width="9" height="2.2" fill="#5f6368"/>
<rect x="7.5" y="16.8" width="2.2" height="2.2" fill="#5f6368"/><rect x="11.5" y="16.8" width="9" height="2.2" fill="#5f6368"/>
</svg>
<div style="position:absolute;left:2398px;top:422px;width:11px;height:42px;border-radius:6px;background:#dadce0"></div>
<svg style="position:absolute;left:1009px;top:295px" width="41" height="38" viewBox="0 0 41 38">
<rect x="0" y="0" width="16.5" height="38" fill="#2f63ae"/><rect x="16.5" y="0" width="24.5" height="38" fill="#d44443"/>
<path d="M4 6 C6 3 11 3 13 6 L12.5 9 H4.5 Z" fill="#fff" opacity="0.85"/><rect x="3" y="9.5" width="11" height="1" fill="#fff" opacity="0.8"/>
<rect x="19" y="4" width="14" height="1.2" fill="#fff" opacity="0.6"/><rect x="19" y="6.5" width="10" height="1.2" fill="#fff" opacity="0.6"/>
<rect x="19" y="34" width="14" height="1" fill="#fff" opacity="0.5"/>
</svg>
<div style="position:absolute;left:1032.5px;top:473.5px;width:841.0999999999999px;height:48.799999999999955px;background:#d9d9d9"></div><svg style="position:absolute;left:0;top:0" width="2428" height="1138"><g stroke="#000" stroke-width="1.45" fill="none"><line x1="1031.7" y1="473.5" x2="1874.3999999999999" y2="473.5"/><line x1="1031.7" y1="522.3" x2="1874.3999999999999" y2="522.3"/><line x1="1031.7" y1="550.4" x2="1874.3999999999999" y2="550.4"/><line x1="1031.7" y1="578.5" x2="1874.3999999999999" y2="578.5"/><line x1="1031.7" y1="606.5" x2="1874.3999999999999" y2="606.5"/><line x1="1031.7" y1="634.3" x2="1874.3999999999999" y2="634.3"/><line x1="1032.5" y1="473.5" x2="1032.5" y2="634.3"/><line x1="1237.3" y1="473.5" x2="1237.3" y2="634.3"/><line x1="1448.5" y1="473.5" x2="1448.5" y2="634.3"/><line x1="1577.5" y1="473.5" x2="1577.5" y2="634.3"/><line x1="1728.3" y1="473.5" x2="1728.3" y2="634.3"/><line x1="1873.6" y1="473.5" x2="1873.6" y2="634.3"/></g></svg>
<div style="position:absolute;left:1041.7px;top:580.5px;width:186.2px;height:24.7px;border-radius:12.3px;background:#e8eaed"></div>
<div style="position:absolute;left:1248.5px;top:580.5px;width:1.6px;height:22.5px;background:#808080"></div>
<div style="position:absolute;left:1430px;top:584px;width:16px;height:16px;border:1px solid #e0e0e0;box-sizing:border-box;background:#fff"></div>
<svg style="position:absolute;left:1430px;top:584px" width="16" height="16"><path d="M4 6.5 H12 L8 10.5 Z" fill="#c0c0c0"/></svg>
<div style="position:absolute;left:1032.2px;top:713.4px;width:841.3999999999999px;height:49.10000000000002px;background:#d9d9d9"></div><svg style="position:absolute;left:0;top:0" width="2428" height="1138"><g stroke="#000" stroke-width="1.45" fill="none"><line x1="1031.4" y1="713.4" x2="1874.3999999999999" y2="713.4"/><line x1="1031.4" y1="762.5" x2="1874.3999999999999" y2="762.5"/><line x1="1031.4" y1="793.5" x2="1874.3999999999999" y2="793.5"/><line x1="1031.4" y1="822.5" x2="1874.3999999999999" y2="822.5"/><line x1="1031.4" y1="853.5" x2="1874.3999999999999" y2="853.5"/><line x1="1031.4" y1="883.7" x2="1874.3999999999999" y2="883.7"/><line x1="1032.2" y1="713.4" x2="1032.2" y2="883.7"/><line x1="1241.5" y1="713.4" x2="1241.5" y2="883.7"/><line x1="1444.4" y1="713.4" x2="1444.4" y2="883.7"/><line x1="1576.5" y1="713.4" x2="1576.5" y2="883.7"/><line x1="1727.9" y1="713.4" x2="1727.9" y2="883.7"/><line x1="1873.6" y1="713.4" x2="1873.6" y2="883.7"/></g></svg>
<div style="position:absolute;left:1032.2px;top:962.6px;width:841.3999999999999px;height:48.69999999999993px;background:#d9d9d9"></div><svg style="position:absolute;left:0;top:0" width="2428" height="1138"><g stroke="#000" stroke-width="1.45" fill="none"><line x1="1031.4" y1="962.6" x2="1874.3999999999999" y2="962.6"/><line x1="1031.4" y1="1011.3" x2="1874.3999999999999" y2="1011.3"/><line x1="1031.4" y1="1042.3" x2="1874.3999999999999" y2="1042.3"/><line x1="1031.4" y1="1071.3" x2="1874.3999999999999" y2="1071.3"/><line x1="1031.4" y1="1102.3" x2="1874.3999999999999" y2="1102.3"/><line x1="1032.2" y1="962.6" x2="1032.2" y2="1102.3"/><line x1="1241.5" y1="962.6" x2="1241.5" y2="1102.3"/><line x1="1444.4" y1="962.6" x2="1444.4" y2="1102.3"/><line x1="1576.5" y1="962.6" x2="1576.5" y2="1102.3"/><line x1="1727.9" y1="962.6" x2="1727.9" y2="1102.3"/><line x1="1873.6" y1="962.6" x2="1873.6" y2="1102.3"/></g></svg>
<div style="position:absolute;left:0;top:1102px;width:2428px;height:36px;background:linear-gradient(rgba(0,0,0,0),rgba(0,0,0,0.03));pointer-events:none"></div>
<div class="t" id="t0" style="left:100px;top:12.95px;font-size:24.4px;font-weight:400;color:#383838;font-family:'Liberation Sans', sans-serif;transform:scaleX(1.0093);transform-origin:0 0;letter-spacing:2px;">KIMCHE</div>
<div class="t" id="t1" style="left:100px;top:34.90px;font-size:28px;font-weight:700;color:#111;font-family:'Liberation Sans', sans-serif;transform:scaleX(0.9561);transform-origin:0 0;">LIBRO DIGITAL</div>
<div class="t" id="t2" style="left:31.4px;top:171.30px;font-size:29.3px;font-weight:400;color:#5a8fba;font-family:'Liberation Sans', sans-serif;transform:scaleX(0.9317);transform-origin:0 0;">Registro de matrícula</div>
<div class="t" id="t3" style="left:31.4px;top:259.10px;font-size:29.3px;font-weight:400;color:#5a8fba;font-family:'Liberation Sans', sans-serif;transform:scaleX(0.9151);transform-origin:0 0;">Libros de clases</div>
<div class="t" id="t4" style="left:31.4px;top:346.10px;font-size:29.3px;font-weight:400;color:#5a8fba;font-family:'Liberation Sans', sans-serif;transform:scaleX(0.9202);transform-origin:0 0;">Funcionarios</div>
<div class="t" id="t5" style="left:31.4px;top:432.90px;font-size:29.3px;font-weight:400;color:#5a8fba;font-family:'Liberation Sans', sans-serif;transform:scaleX(0.9427);transform-origin:0 0;">Documentos</div>
<div class="t" id="t6" style="left:31.4px;top:519.90px;font-size:29.3px;font-weight:400;color:#5a8fba;font-family:'Liberation Sans', sans-serif;transform:scaleX(0.9370);transform-origin:0 0;">Configuración</div>
<div class="t" id="t7" style="left:32px;top:609.04px;font-size:27.6px;font-weight:400;color:#3f7aaa;font-family:'Liberation Sans', sans-serif;transform:scaleX(0.9851);transform-origin:0 0;-webkit-text-stroke:0.9px #3f7aaa;">Libro PIE</div>
<div class="t" id="t8" style="left:32px;top:645.79px;font-size:19.5px;font-weight:400;color:#3d4551;font-family:'Liberation Sans', sans-serif;transform:scaleX(0.9811);transform-origin:0 0;">Accede al documento oficial para los</div>
<div class="t" id="t9" style="left:32px;top:672.59px;font-size:19.5px;font-weight:400;color:#3d4551;font-family:'Liberation Sans', sans-serif;transform:scaleX(0.9898);transform-origin:0 0;">distintos cursos y edita</div>
<div class="t" id="t10" style="left:32px;top:699.09px;font-size:19.5px;font-weight:400;color:#3d4551;font-family:'Liberation Sans', sans-serif;transform:scaleX(0.9937);transform-origin:0 0;">colaborativamente</div>
<div class="t" id="t11" style="left:141.5px;top:1088.61px;font-size:47px;font-weight:400;color:#dde0e5;font-family:'Liberation Sans', sans-serif;transform:scaleX(0.9262);transform-origin:0 0;letter-spacing:9px;">KIMCHE</div>
<div class="t" id="t12" style="left:635px;top:25.75px;font-size:21.2px;font-weight:400;color:#3b4658;font-family:'Liberation Sans', sans-serif;transform:scaleX(0.9859);transform-origin:0 0;">¿Tienes problemas para visualizar el documento? Ingresa al</div>
<div class="t" id="t13" style="left:1200px;top:25.75px;font-size:21.2px;font-weight:400;color:#56287f;font-family:'Liberation Sans', sans-serif;transform:scaleX(1.0122);transform-origin:0 0;text-decoration:underline;text-underline-offset:3px;">siguiente link</div>
<div class="t" id="t14" style="left:1330.6px;top:25.75px;font-size:21.2px;font-weight:400;color:#3b4658;font-family:'Liberation Sans', sans-serif;transform:scaleX(0.9984);transform-origin:0 0;">e inicia sesión con tu cuenta de Google. Si tú o algún miembro de tu equipo no tiene acceso al documento</div>
<div class="t" id="t15" style="left:635px;top:53.15px;font-size:21.2px;font-weight:400;color:#3b4658;font-family:'Liberation Sans', sans-serif;transform:scaleX(1.0090);transform-origin:0 0;">puedes otorgarlo a través del botón</div>
<div class="t" id="t16" style="left:1000px;top:53.15px;font-size:21.2px;font-weight:400;color:#3b4658;font-family:'Liberation Sans', sans-serif;transform:scaleX(1.0000);transform-origin:0 0;">.</div>
<div class="t" id="t17" style="left:631px;top:145.54px;font-size:23.7px;font-weight:400;color:#202124;font-family:'Liberation Sans', sans-serif;transform:scaleX(0.9711);transform-origin:0 0;">2° Básico A</div>
<div class="t" id="t18" style="left:630px;top:182.66px;font-size:18.6px;font-weight:400;color:#202124;font-family:'Liberation Sans', sans-serif;transform:scaleX(1.0226);transform-origin:0 0;">Archivo</div>
<div class="t" id="t19" style="left:713px;top:182.66px;font-size:18.6px;font-weight:400;color:#202124;font-family:'Liberation Sans', sans-serif;transform:scaleX(1.0000);transform-origin:0 0;">Editar</div>
<div class="t" id="t20" style="left:780.8px;top:182.66px;font-size:18.6px;font-weight:400;color:#202124;font-family:'Liberation Sans', sans-serif;transform:scaleX(1.0071);transform-origin:0 0;">Ver</div>
<div class="t" id="t21" style="left:828.4px;top:182.66px;font-size:18.6px;font-weight:400;color:#202124;font-family:'Liberation Sans', sans-serif;transform:scaleX(1.0381);transform-origin:0 0;">Insertar</div>
<div class="t" id="t22" style="left:913.4px;top:182.66px;font-size:18.6px;font-weight:400;color:#202124;font-family:'Liberation Sans', sans-serif;transform:scaleX(1.0319);transform-origin:0 0;">Formato</div>
<div class="t" id="t23" style="left:1004.2px;top:182.66px;font-size:18.6px;font-weight:400;color:#202124;font-family:'Liberation Sans', sans-serif;transform:scaleX(1.0214);transform-origin:0 0;">Herramientas</div>
<div class="t" id="t24" style="left:1138.2px;top:182.66px;font-size:18.6px;font-weight:400;color:#202124;font-family:'Liberation Sans', sans-serif;transform:scaleX(1.0328);transform-origin:0 0;">Complementos</div>
<div class="t" id="t25" style="left:1287px;top:182.66px;font-size:18.6px;font-weight:400;color:#202124;font-family:'Liberation Sans', sans-serif;transform:scaleX(0.9962);transform-origin:0 0;">Ayuda</div>
<div class="t" id="t26" style="left:1367.7px;top:182.66px;font-size:18.6px;font-weight:400;color:#5f6368;font-family:'Liberation Sans', sans-serif;transform:scaleX(1.0118);transform-origin:0 0;text-decoration:underline;">Última modificación hace unos segundos</div>
<div class="t" id="t27" style="left:2201.8px;top:159.30px;font-size:20.2px;font-weight:400;color:#b2b4b6;font-family:'Liberation Sans', sans-serif;transform:scaleX(1.0337);transform-origin:0 0;">Compartir</div>
<div class="t" id="t28" style="left:778px;top:232.06px;font-size:16px;font-weight:400;color:#3c4043;font-family:'Liberation Sans', sans-serif;transform:scaleX(0.9268);transform-origin:0 0;">100%</div>
<div class="t" id="t29" style="left:877.7px;top:232.06px;font-size:16px;font-weight:400;color:#3c4043;font-family:'Liberation Sans', sans-serif;transform:scaleX(0.9946);transform-origin:0 0;">Texto norm...</div>
<div class="t" id="t30" style="left:1030px;top:232.06px;font-size:16px;font-weight:400;color:#3c4043;font-family:'Liberation Sans', sans-serif;transform:scaleX(0.9911);transform-origin:0 0;">Calibri</div>
<div class="t" id="t31" style="left:1218.3px;top:231.63px;font-size:16.5px;font-weight:400;color:#3c4043;font-family:'Liberation Sans', sans-serif;transform:translateX(-50%) scaleX(1.0000);transform-origin:50% 0;">11</div>
<div class="t" id="t32" style="left:904.5px;top:269.73px;font-size:12.6px;font-weight:400;color:#3c4043;font-family:'Liberation Sans', sans-serif;transform:translateX(-50%) scaleX(1.0000);transform-origin:50% 0;">2</div>
<div class="t" id="t33" style="left:955.5px;top:269.73px;font-size:12.6px;font-weight:400;color:#3c4043;font-family:'Liberation Sans', sans-serif;transform:translateX(-50%) scaleX(1.0000);transform-origin:50% 0;">1</div>
<div class="t" id="t34" style="left:1055.5px;top:269.73px;font-size:12.6px;font-weight:400;color:#3c4043;font-family:'Liberation Sans', sans-serif;transform:translateX(-50%) scaleX(1.0000);transform-origin:50% 0;">1</div>
<div class="t" id="t35" style="left:1106.5px;top:269.73px;font-size:12.6px;font-weight:400;color:#3c4043;font-family:'Liberation Sans', sans-serif;transform:translateX(-50%) scaleX(1.0000);transform-origin:50% 0;">2</div>
<div class="t" id="t36" style="left:1157.5px;top:269.73px;font-size:12.6px;font-weight:400;color:#3c4043;font-family:'Liberation Sans', sans-serif;transform:translateX(-50%) scaleX(1.0000);transform-origin:50% 0;">3</div>
<div class="t" id="t37" style="left:1207.5px;top:269.73px;font-size:12.6px;font-weight:400;color:#3c4043;font-family:'Liberation Sans', sans-serif;transform:translateX(-50%) scaleX(1.0000);transform-origin:50% 0;">4</div>
<div class="t" id="t38" style="left:1257.5px;top:269.73px;font-size:12.6px;font-weight:400;color:#3c4043;font-family:'Liberation Sans', sans-serif;transform:translateX(-50%) scaleX(1.0000);transform-origin:50% 0;">5</div>
<div class="t" id="t39" style="left:1307.5px;top:269.73px;font-size:12.6px;font-weight:400;color:#3c4043;font-family:'Liberation Sans', sans-serif;transform:translateX(-50%) scaleX(1.0000);transform-origin:50% 0;">6</div>
<div class="t" id="t40" style="left:1358.5px;top:269.73px;font-size:12.6px;font-weight:400;color:#3c4043;font-family:'Liberation Sans', sans-serif;transform:translateX(-50%) scaleX(1.0000);transform-origin:50% 0;">7</div>
<div class="t" id="t41" style="left:1408.5px;top:269.73px;font-size:12.6px;font-weight:400;color:#3c4043;font-family:'Liberation Sans', sans-serif;transform:translateX(-50%) scaleX(1.0000);transform-origin:50% 0;">8</div>
<div class="t" id="t42" style="left:1459.5px;top:269.73px;font-size:12.6px;font-weight:400;color:#3c4043;font-family:'Liberation Sans', sans-serif;transform:translateX(-50%) scaleX(1.0000);transform-origin:50% 0;">9</div>
<div class="t" id="t43" style="left:1509.5px;top:269.73px;font-size:12.6px;font-weight:400;color:#3c4043;font-family:'Liberation Sans', sans-serif;transform:translateX(-50%) scaleX(1.0000);transform-origin:50% 0;">10</div>
<div class="t" id="t44" style="left:1559.5px;top:269.73px;font-size:12.6px;font-weight:400;color:#3c4043;font-family:'Liberation Sans', sans-serif;transform:translateX(-50%) scaleX(1.0000);transform-origin:50% 0;">11</div>
<div class="t" id="t45" style="left:1610.5px;top:269.73px;font-size:12.6px;font-weight:400;color:#3c4043;font-family:'Liberation Sans', sans-serif;transform:translateX(-50%) scaleX(1.0000);transform-origin:50% 0;">12</div>
<div class="t" id="t46" style="left:1661.5px;top:269.73px;font-size:12.6px;font-weight:400;color:#3c4043;font-family:'Liberation Sans', sans-serif;transform:translateX(-50%) scaleX(1.0000);transform-origin:50% 0;">13</div>
<div class="t" id="t47" style="left:1711.5px;top:269.73px;font-size:12.6px;font-weight:400;color:#3c4043;font-family:'Liberation Sans', sans-serif;transform:translateX(-50%) scaleX(1.0000);transform-origin:50% 0;">14</div>
<div class="t" id="t48" style="left:1761.5px;top:269.73px;font-size:12.6px;font-weight:400;color:#3c4043;font-family:'Liberation Sans', sans-serif;transform:translateX(-50%) scaleX(1.0000);transform-origin:50% 0;">15</div>
<div class="t" id="t49" style="left:1811.5px;top:269.73px;font-size:12.6px;font-weight:400;color:#3c4043;font-family:'Liberation Sans', sans-serif;transform:translateX(-50%) scaleX(1.0000);transform-origin:50% 0;">16</div>
<div class="t" id="t50" style="left:1862.5px;top:269.73px;font-size:12.6px;font-weight:400;color:#3c4043;font-family:'Liberation Sans', sans-serif;transform:translateX(-50%) scaleX(1.0000);transform-origin:50% 0;">17</div>
<div class="t" id="t51" style="left:1912.5px;top:269.73px;font-size:12.6px;font-weight:400;color:#3c4043;font-family:'Liberation Sans', sans-serif;transform:translateX(-50%) scaleX(1.0000);transform-origin:50% 0;">18</div>
<div class="t" id="t52" style="left:1963.5px;top:269.73px;font-size:12.6px;font-weight:400;color:#3c4043;font-family:'Liberation Sans', sans-serif;transform:translateX(-50%) scaleX(1.0000);transform-origin:50% 0;">19</div>
<div class="t" id="t53" style="left:1069px;top:320.36px;font-size:15.4px;font-weight:400;color:#000;font-family:'Liberation Sans', sans-serif;transform:scaleX(1.0037);transform-origin:0 0;">Educación Especial</div>
<div class="t" id="t54" style="left:1006.6px;top:344.30px;font-size:17.6px;font-weight:700;color:#000;font-family:'Liberation Sans', sans-serif;transform:scaleX(1.0025);transform-origin:0 0;">I EQUIPO DE AULA</div>
<div class="t" id="t55" style="left:1174px;top:343.64px;font-size:10px;font-weight:700;color:#000;font-family:'Liberation Sans', sans-serif;transform:scaleX(0.9167);transform-origin:0 0;">1</div>
<div class="t" id="t56" style="left:1006px;top:394.26px;font-size:19.3px;font-weight:700;color:#000;font-family:'Liberation Sans', sans-serif;transform:scaleX(0.9576);transform-origin:0 0;">1.- Identificación del Equipo de Aula</div>
<div class="t" id="t57" style="left:1006px;top:443.66px;font-size:16px;font-weight:400;color:#000;font-family:'Liberation Sans', sans-serif;transform:scaleX(1.1013);transform-origin:0 0;">Docente(s) de educación regular del curso:</div>
<div class="t" id="t58" style="left:1006px;top:684.06px;font-size:16px;font-weight:400;color:#000;font-family:'Liberation Sans', sans-serif;transform:scaleX(1.0817);transform-origin:0 0;">Profesores especializados:</div>
<div class="t" id="t59" style="left:1006px;top:933.56px;font-size:16px;font-weight:400;color:#000;font-family:'Liberation Sans', sans-serif;transform:scaleX(1.0891);transform-origin:0 0;">Profesionales especializados asistentes de la educación:</div>
<div class="t" id="t60" style="left:1135.2px;top:479.76px;font-size:16px;font-weight:700;color:#000;font-family:'Liberation Sans', sans-serif;transform:translateX(-50%) scaleX(1.0833);transform-origin:50% 0;">Nombre</div>
<div class="t" id="t61" style="left:1343.2px;top:479.76px;font-size:16px;font-weight:700;color:#000;font-family:'Liberation Sans', sans-serif;transform:translateX(-50%) scaleX(1.0667);transform-origin:50% 0;">Núcleo, asignatura y/o</div>
<div class="t" id="t62" style="left:1342.8px;top:503.76px;font-size:16px;font-weight:700;color:#000;font-family:'Liberation Sans', sans-serif;transform:translateX(-50%) scaleX(1.0621);transform-origin:50% 0;">módulo</div>
<div class="t" id="t63" style="left:1512.9px;top:479.76px;font-size:16px;font-weight:700;color:#000;font-family:'Liberation Sans', sans-serif;transform:translateX(-50%) scaleX(1.0723);transform-origin:50% 0;">Teléfono</div>
<div class="t" id="t64" style="left:1653.2px;top:479.76px;font-size:16px;font-weight:700;color:#000;font-family:'Liberation Sans', sans-serif;transform:translateX(-50%) scaleX(1.0327);transform-origin:50% 0;">Correo</div>
<div class="t" id="t65" style="left:1653px;top:503.76px;font-size:16px;font-weight:700;color:#000;font-family:'Liberation Sans', sans-serif;transform:translateX(-50%) scaleX(1.0345);transform-origin:50% 0;">Electrónico</div>
<div class="t" id="t66" style="left:1800.6px;top:479.76px;font-size:16px;font-weight:700;color:#000;font-family:'Liberation Sans', sans-serif;transform:translateX(-50%) scaleX(1.0455);transform-origin:50% 0;">Firma</div>
<div class="t" id="t67" style="left:1042.7px;top:529.76px;font-size:16px;font-weight:400;color:#000;font-family:'Liberation Sans', sans-serif;transform:scaleX(1.0184);transform-origin:0 0;">Karla Reyes</div>
<div class="t" id="t68" style="left:1042.7px;top:557.46px;font-size:16px;font-weight:400;color:#000;font-family:'Liberation Sans', sans-serif;transform:scaleX(1.0683);transform-origin:0 0;">Allegra Zaccarelli</div>
<div class="t" id="t69" style="left:1049.4px;top:585.86px;font-size:16px;font-weight:400;color:#000;font-family:'Liberation Sans', sans-serif;transform:scaleX(1.0854);transform-origin:0 0;">Antonia Santibáñez B.</div>
<div class="t" id="t70" style="left:1136.9px;top:720.56px;font-size:16px;font-weight:700;color:#000;font-family:'Liberation Sans', sans-serif;transform:translateX(-50%) scaleX(1.1000);transform-origin:50% 0;">Nombre</div>
<div class="t" id="t71" style="left:1343px;top:720.56px;font-size:16px;font-weight:700;color:#000;font-family:'Liberation Sans', sans-serif;transform:translateX(-50%) scaleX(1.0204);transform-origin:50% 0;">Especialidad</div>
<div class="t" id="t72" style="left:1510.2px;top:720.56px;font-size:16px;font-weight:700;color:#000;font-family:'Liberation Sans', sans-serif;transform:translateX(-50%) scaleX(1.0615);transform-origin:50% 0;">Teléfono</div>
<div class="t" id="t73" style="left:1651.9px;top:720.56px;font-size:16px;font-weight:700;color:#000;font-family:'Liberation Sans', sans-serif;transform:translateX(-50%) scaleX(1.0423);transform-origin:50% 0;">Correo</div>
<div class="t" id="t74" style="left:1651.8px;top:744.36px;font-size:16px;font-weight:700;color:#000;font-family:'Liberation Sans', sans-serif;transform:translateX(-50%) scaleX(1.0287);transform-origin:50% 0;">Electrónico</div>
<div class="t" id="t75" style="left:1800.4px;top:720.56px;font-size:16px;font-weight:700;color:#000;font-family:'Liberation Sans', sans-serif;transform:translateX(-50%) scaleX(1.0273);transform-origin:50% 0;">Firma</div>
<div class="t" id="t76" style="left:1136.9px;top:969.76px;font-size:16px;font-weight:700;color:#000;font-family:'Liberation Sans', sans-serif;transform:translateX(-50%) scaleX(1.1000);transform-origin:50% 0;">Nombre</div>
<div class="t" id="t77" style="left:1343px;top:969.76px;font-size:16px;font-weight:700;color:#000;font-family:'Liberation Sans', sans-serif;transform:translateX(-50%) scaleX(1.0204);transform-origin:50% 0;">Especialidad</div>
<div class="t" id="t78" style="left:1510.2px;top:969.76px;font-size:16px;font-weight:700;color:#000;font-family:'Liberation Sans', sans-serif;transform:translateX(-50%) scaleX(1.0615);transform-origin:50% 0;">Teléfono</div>
<div class="t" id="t79" style="left:1651.9px;top:969.76px;font-size:16px;font-weight:700;color:#000;font-family:'Liberation Sans', sans-serif;transform:translateX(-50%) scaleX(1.0423);transform-origin:50% 0;">Correo</div>
<div class="t" id="t80" style="left:1651.8px;top:993.56px;font-size:16px;font-weight:700;color:#000;font-family:'Liberation Sans', sans-serif;transform:translateX(-50%) scaleX(1.0287);transform-origin:50% 0;">Electrónico</div>
<div class="t" id="t81" style="left:1800.4px;top:969.76px;font-size:16px;font-weight:700;color:#000;font-family:'Liberation Sans', sans-serif;transform:translateX(-50%) scaleX(1.0273);transform-origin:50% 0;">Firma</div>
<div style="position:absolute;left:1439px;top:267px;width:20px;height:18px;background:#e3e4e6"></div><svg style="position:absolute;left:1439px;top:267px" width="20" height="18"><rect x="9" y="3" width="2" height="2" fill="#9aa0a6"/><rect x="9" y="7" width="2" height="2" fill="#9aa0a6"/><rect x="9" y="11" width="2" height="2" fill="#9aa0a6"/></svg><svg style="position:absolute;left:1420px;top:266px" width="40" height="20" viewBox="0 0 40 20"><path d="M10.5 9.6 H26.5 L18.5 17.8 Z" fill="#4285f4"/></svg>
</body></html>
